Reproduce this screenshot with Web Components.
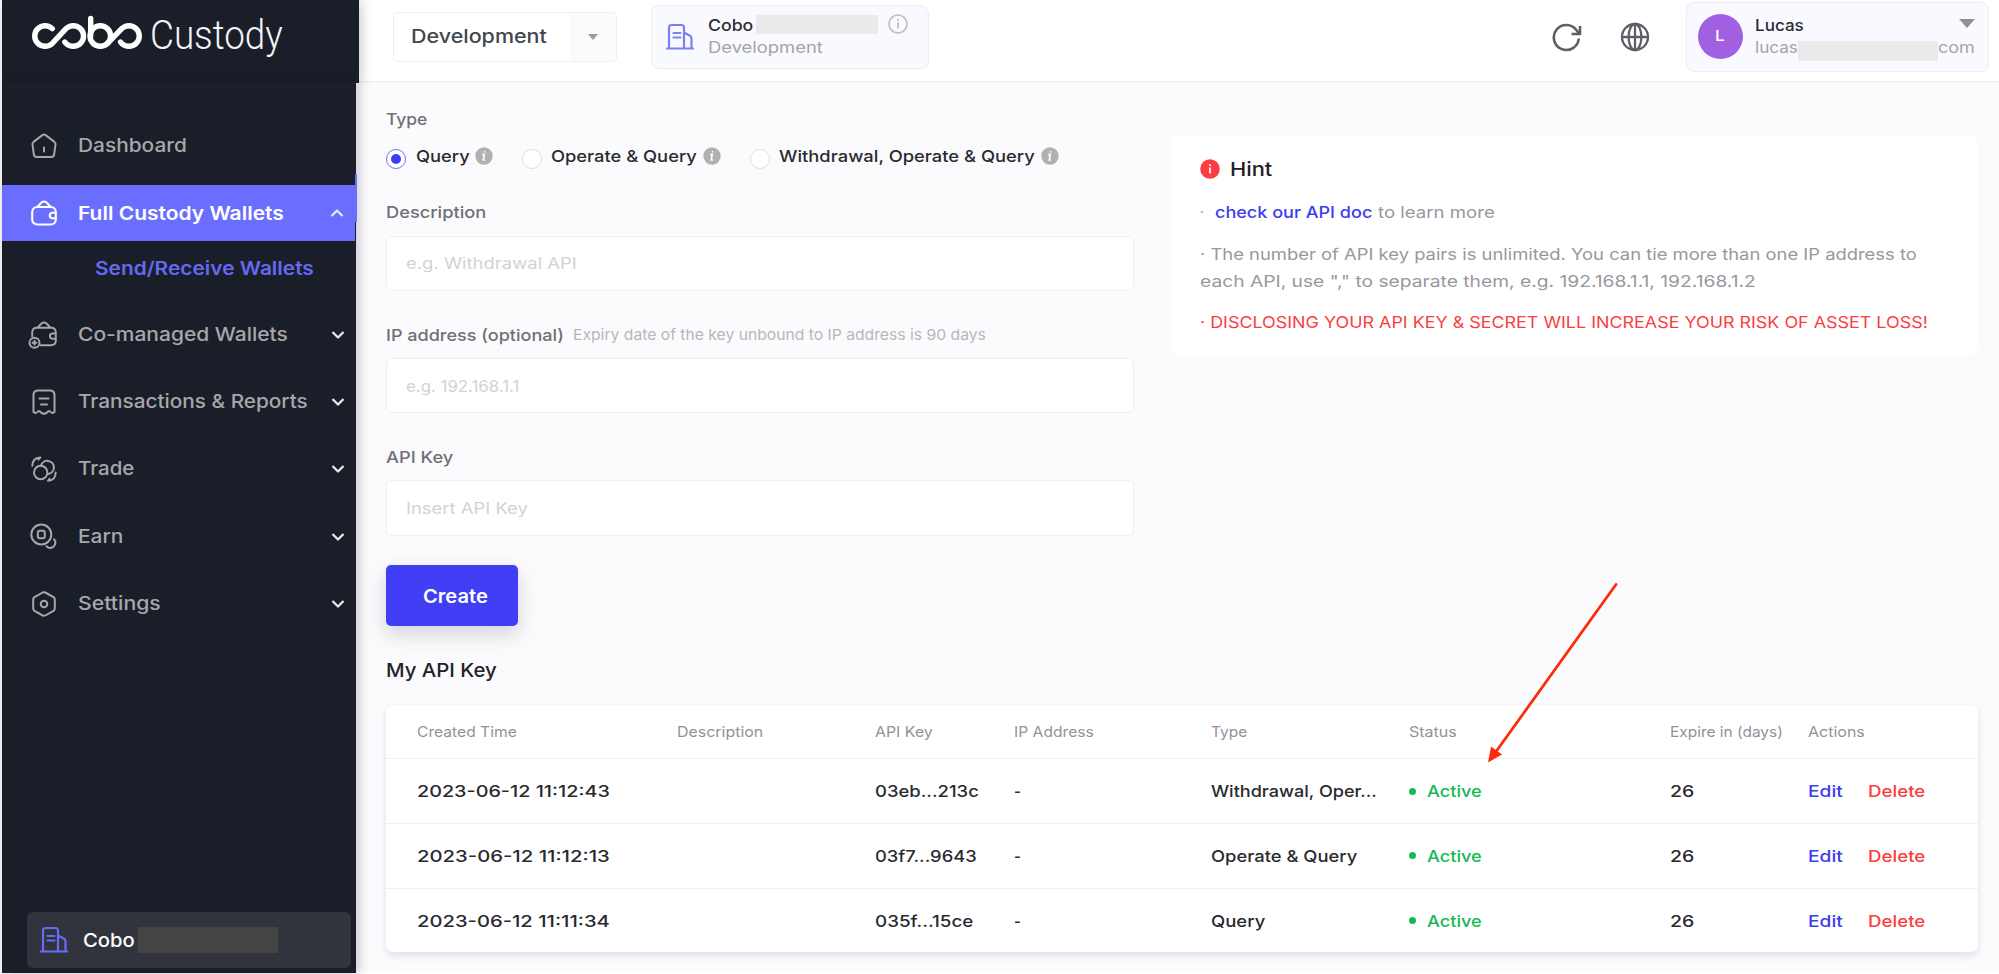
<!DOCTYPE html>
<html lang="en">
<head>
<meta charset="utf-8">
<title>Cobo Custody</title>
<style>
html,body{margin:0;height:100%;background:#fff;overflow:hidden}
body{font-family:Inter,"Open Sans",sans-serif;font-weight:460;color:#1f2026}
</style>
</head>
<body>
<custody-app></custody-app>
<script>
const define = (name, html, setup) => customElements.define(name, class extends HTMLElement {
  connectedCallback() {
    if (this.shadowRoot) return;
    const root = this.attachShadow({mode: 'open'});
    root.innerHTML = typeof html === 'function' ? html(this) : html;
    if (setup) setup(this, root);
  }
});

const S = 'fill="none" stroke="currentColor" stroke-linecap="round" stroke-linejoin="round"';
const ICONS = {
  home: `<svg width="28" height="28" viewBox="0 0 28 28" ${S} stroke-width="2"><path d="M12.700 2.900Q14 2 15.300 2.900L24.500 9.900Q25.800 11 25.500 12.600L24.100 22.800Q23.700 25 21.500 25H6.500Q4.300 25 3.900 22.800L2.500 12.600Q2.200 11 3.500 9.900ZM14 15.500V19.500"/></svg>`,
  wallet: `<svg width="28" height="28" viewBox="0 0 28 28" ${S} stroke-width="2.100"><rect x="2.200" y="8" width="23.600" height="17.500" rx="5"/><path d="M7.500 7.800L11.500 3.500Q14 1.500 16.500 3.500L20.500 7.800M25.500 13.800H22.500a2.700 2.700 0 0 0 0 5.400H25.500"/></svg>`,
  cowallet: `<svg width="32" height="30" viewBox="-4 0 32 30" ${S} stroke-width="1.900"><path d="M2.200 16.500V12.500Q2.200 7.800 7 7.800H21Q25.800 7.800 25.800 12.500V20.500Q25.800 25.200 21 25.200H10.500M7.500 7.600L11.500 3.500Q14 1.500 16.500 3.500L20.500 7.600M25.500 13.500H22.500a2.600 2.600 0 0 0 0 5.200H25.500"/><circle cx="4.500" cy="22.800" r="5"/><path d="M4.500 20.800V24.800M2.500 22.800H6.500"/></svg>`,
  receipt: `<svg width="28" height="28" viewBox="0 0 28 28" ${S} stroke-width="2"><path d="M3.500 24V7Q3.500 2.500 8 2.500H20Q24.500 2.500 24.500 7V24Q22 26 20 23.500Q18.500 22.500 17 24.500Q15.500 26 14 25.500Q12.500 26 11 24.500Q9.500 22.500 8 23.500Q6 26 3.500 24ZM9.500 10.500H18.500M11 16.500H17"/></svg>`,
  trade: `<svg width="28" height="28" viewBox="0 0 28 28" ${S} stroke-width="2"><circle cx="10.700" cy="17.500" r="6.700"/><path d="M11 10.500a6.600 6.600 0 1 1 7 8.500M2.300 10.800Q2.500 3 10.300 2.500L8.500 4.500M25.700 17.500Q25.500 25.500 18 25.800L19.500 23.800"/></svg>`,
  earn: `<svg width="28" height="28" viewBox="0 0 28 28" ${S} stroke-width="2"><circle cx="11.300" cy="11.500" r="10"/><rect x="7.800" y="7.800" width="7" height="7.500" rx="2"/><path d="M24 16.200a5.200 5.200 0 1 1 -7.700 7"/></svg>`,
  gear: `<svg width="28" height="28" viewBox="0 0 28 28" ${S} stroke-width="2"><path d="M12.700 2.500Q14 1.800 15.300 2.500L23.500 7.100Q24.800 7.900 24.800 9.400V18.600Q24.800 20.100 23.500 20.900L15.300 25.500Q14 26.200 12.700 25.500L4.500 20.900Q3.200 20.100 3.200 18.600V9.400Q3.200 7.900 4.500 7.100Z"/><circle cx="14" cy="14" r="3.300"/></svg>`,
  down: `<svg width="14" height="10" viewBox="0 0 14 10" ${S} stroke-width="2.300" style="stroke-linecap:butt"><path d="M1.500 2L7 7.500L12.500 2"/></svg>`,
  up: `<svg width="14" height="10" viewBox="0 0 14 10" ${S} stroke-width="2.200" style="stroke-linecap:butt"><path d="M1.500 8L7 2.500L12.500 8"/></svg>`,
  building: `<svg width="28" height="28" viewBox="0 0 28 28" ${S} stroke-width="2.200"><path d="M1 25.500H27M3 25.500V4.500Q3 2 5.500 2H15.500Q18 2 18 4.500V25.500M18 9.500L24 12.700Q25.500 13.500 25.500 15.500V25.500M7.500 10H14.500M7.500 14.500H14.500"/></svg>`,
  info: `<svg width="20" height="20" viewBox="0 0 20 20" fill="none" stroke="#bcbdc1" stroke-width="1.600"><circle cx="10" cy="10" r="9"/><path d="M10 8.500V14.500M10 5V7" stroke-width="1.800"/></svg>`,
  dotinfo: `<svg width="18" height="18" viewBox="0 0 18 18"><circle cx="9" cy="9" r="8.700" fill="#b1b1b3"/><path d="M9.700 4.200L9.500 5.600M7.200 7.600H9.300L8.200 13H10" stroke="#fff" stroke-width="1.600" fill="none"/></svg>`,
  alert: `<svg width="20" height="20" viewBox="0 0 20 20"><circle cx="10" cy="10" r="9.800" fill="#fb3d43"/><path d="M10 8.500V14.500M10 5.200V7" stroke="#fff" stroke-width="1.700"/></svg>`,
  refresh: `<svg width="30" height="30" viewBox="0 0 30 30" fill="none" stroke="#5c5f66" stroke-width="2.600" stroke-linejoin="round"><path d="M26.800 16.500A12.500 12.500 0 1 1 24.500 8.200L27 11.300M28 4V12H19.500"/></svg>`,
  globe: `<svg width="30" height="30" viewBox="0 0 30 30" fill="none" stroke="#5c5f66" stroke-width="2.300"><circle cx="15" cy="15" r="13"/><ellipse cx="15" cy="15" rx="6.400" ry="13"/><path d="M2 15H28M15 2V28"/></svg>`,
  caret: `<svg width="10" height="6" viewBox="0 0 10 6" fill="#9a9ca1"><path d="M0 0H10L5 6Z"/></svg>`,
  bigcaret: `<svg width="16" height="9" viewBox="0 0 16 9" fill="#8f9197"><path d="M0 0H16L8 9Z"/></svg>`,
  cobo: `<svg width="112" height="36" viewBox="31 14 112 36" fill="none" stroke="#fff" stroke-width="5.400" stroke-linecap="round" stroke-linejoin="round"><path d="M52.300 28.700A10.300 10.300 0 1 0 52.300 43.300L66 28.700A10.300 10.300 0 1 1 66 43.300L64.800 42"/><circle cx="100.300" cy="36" r="10.300"/><path d="M90.700 18.500V36M107.600 43.300L121.700 28.700A10.300 10.300 0 1 1 121.700 43.300L120.500 42"/></svg>`
};
define('ui-icon', el => `<style>:host{display:inline-flex;flex:none}svg{display:block}</style>${ICONS[el.getAttribute('name')]}`);

define('side-item', el => {
  const open = el.hasAttribute('active');
  return `<style>
  :host{display:flex;align-items:center;height:56px;margin-bottom:11.400px;color:#a6a7aa;font-size:18.700px;line-height:28px;position:relative;box-sizing:border-box;padding:0 11px 0 28px}
  :host([active]){background:#6a6eff;color:#fff;font-weight:600;margin-bottom:0;width:353.500px}
  :host([active]) slot{display:block;padding-top:1px}
  .ic{width:28px;height:30px;display:flex;align-items:center;justify-content:center;margin-right:20px}
  .co{margin-left:-4px}
  .chev{margin-left:auto;color:#e8e8ea}
  .mark{position:absolute;left:353px;top:-11px;width:2px;height:48px;background:#6a6eff}
  </style><span class="ic"><ui-icon class="${el.getAttribute('icon') === 'cowallet' ? 'co' : ''}" name="${el.getAttribute('icon')}"></ui-icon></span><slot></slot>
  ${el.hasAttribute('plain') ? '' : `<ui-icon class="chev" name="${open ? 'up' : 'down'}"></ui-icon>`}${open ? '<i class="mark"></i>' : ''}`;
});

define('side-bar', `<style>
  :host{display:flex;flex-direction:column;width:357.500px;height:972.500px;position:relative;z-index:2;font-weight:500}
  .logo{height:82.500px;background:#1a1e28;box-shadow:2px 0 12px rgba(0,0,20,.22);display:flex;align-items:flex-start;box-sizing:border-box;padding:14px 0 0 29px;border-bottom:1px solid #20232e;color:#f4f4f5}
  .custody{margin-left:7.500px;font:300 41.500px/50px Roboto,sans-serif;margin-top:-4px}
  .body{flex:1;background:#1a1e28;width:354.500px;box-shadow:2px 0 11px rgba(0,0,30,.26);display:flex;flex-direction:column;box-sizing:border-box;padding-top:35.200px}
  .sub{height:65.500px;box-sizing:border-box;padding:13.500px 0 0 93px;font:600 18.700px/28px Inter,sans-serif;color:#6468f3}
  .foot{margin:auto 5px 4.500px 25px;height:56px;border-radius:6px;background:#31333d;display:flex;align-items:center;padding-left:13px;color:#fff;font-size:18.700px}
  .foot ui-icon{color:#686cf5;margin-right:15px}
  .mask{width:140px;height:26px;background:#444;margin:-1px 0 0 4px}
  </style>
  <div class="logo"><ui-icon name="cobo"></ui-icon><fit-text class="custody" w="132">Custody</fit-text></div>
  <div class="body">
    <side-item icon="home" plain><fit-text w="108">Dashboard</fit-text></side-item>
    <side-item icon="wallet" active><fit-text w="205">Full Custody Wallets</fit-text></side-item>
    <div class="sub"><fit-text w="218">Send/Receive Wallets</fit-text></div>
    <side-item icon="cowallet"><fit-text w="209">Co-managed Wallets</fit-text></side-item>
    <side-item icon="receipt"><fit-text w="229">Transactions &amp; Reports</fit-text></side-item>
    <side-item icon="trade"><fit-text w="55.500">Trade</fit-text></side-item>
    <side-item icon="earn"><fit-text w="44.500">Earn</fit-text></side-item>
    <side-item icon="gear"><fit-text w="82">Settings</fit-text></side-item>
    <div class="foot"><ui-icon name="building"></ui-icon><fit-text w="51">Cobo</fit-text><span class="mask"></span></div>
  </div>`);

define('top-bar', `<style>
  :host{display:flex;align-items:flex-start;height:82px;box-sizing:border-box;background:#fff;border-bottom:1.500px solid #ebebee;padding-left:33.500px}
  .select{display:flex;width:224px;height:50px;box-sizing:border-box;border:1.500px solid #efeff0;border-radius:5px;margin-top:11.500px;align-items:center;padding-left:17px;font-size:18.700px;color:#43454d;overflow:hidden}
  .select b{margin-left:auto;width:46px;height:100%;background:#fafbfb;display:flex;align-items:center;justify-content:center}
  .card{box-sizing:border-box;background:#f9faff;border:1.500px solid #ececf1;border-radius:8px;display:flex;font-size:16px;line-height:22px}
  .org{width:278px;height:64.500px;margin:4.500px 0 0 34.500px;padding-left:13.500px}
  .org ui-icon.b{color:#7b7ff8;margin:17px 14.500px 0 0}
  .row{display:flex;height:22px;align-items:flex-start}
  .org .col{padding-top:8.300px}.sub{color:#a3a4a8}
  .mask{background:#eaeaea;flex:none}
  .org .m{width:122px;height:18.500px;margin:1.500px 10px 0 2.500px}
  .acts{margin-left:auto;display:flex;gap:37.500px;padding-top:21.500px}
  .user{width:303px;height:70px;margin:1.500px 10.500px 0 36px;padding-left:11px}
  .av{flex:none;width:45px;height:45px;border-radius:50%;background:#a15fe1;color:#fff;display:flex;align-items:center;justify-content:center;margin:11px 12.500px 0 0;font-size:15px}
  .user .col{padding-top:11px;width:220px}
  .user .m{width:140.500px;height:20.500px;margin:5px 0 0 0}
  .user ui-icon{margin:5.500px 0 0 auto}
  </style>
  <div class="select"><fit-text w="135">Development</fit-text><b><ui-icon name="caret"></ui-icon></b></div>
  <div class="card org"><ui-icon class="b" name="building"></ui-icon><div class="col">
    <div class="row"><fit-text w="44.500" style="color:#2b2d35;font-weight:500">Cobo</fit-text><span class="mask m"></span><ui-icon name="info"></ui-icon></div>
    <div class="row sub"><fit-text w="114" style="font-weight:400">Development</fit-text></div></div></div>
  <div class="acts"><ui-icon name="refresh"></ui-icon><ui-icon name="globe"></ui-icon></div>
  <div class="card user"><div class="av"><fit-text w="9">L</fit-text></div><div class="col">
    <div class="row"><fit-text w="48" style="color:#2b2d35;font-weight:550">Lucas</fit-text><ui-icon name="bigcaret"></ui-icon></div>
    <div class="row sub"><fit-text w="42" style="font-weight:400">lucas</fit-text><span class="mask m"></span><fit-text w="36" style="font-weight:400">com</fit-text></div></div></div>`);

define('radio-option', `<style>
  :host{display:flex;align-items:center;height:24px;color:#2a2b30;font-size:16.300px}
  i{width:20px;height:20px;box-sizing:border-box;border:1.500px solid #dfdfe1;border-radius:50%;background:#fff;margin:7px 9.500px 0 0;display:flex;align-items:center;justify-content:center}
  :host([checked]) i{border-color:#6f70fa}
  :host([checked]) i::before{content:"";width:10px;height:10px;border-radius:50%;background:#3d3df5}
  ui-icon{margin-left:6px;margin-top:1px}
  </style><i></i><slot></slot><ui-icon name="dotinfo"></ui-icon>`);

define('form-field', `<style>
  :host{display:block;margin-bottom:31.500px}
  .label{height:24px;line-height:24px;font-size:16.500px;color:#6f7075;display:flex;margin-bottom:11.200px}
  .box{height:55.500px;box-sizing:border-box;border:1.500px solid #efeff0;border-radius:6px;background:#fff;padding-left:19px;display:flex;align-items:center;font-size:16.300px;font-weight:400;color:#d2d3d5}
  </style><div class="label"><slot name="label"></slot></div><div class="box"><slot></slot></div>`);

define('key-form', `<style>
  :host{display:block;width:747.500px}
  .type{height:24px;line-height:24px;font-size:16.500px;color:#6f7075}
  .radios{display:flex;margin:12.700px 0 32.500px}
  radio-option+radio-option{margin-left:28.500px}
  .create{width:132px;height:61.500px;border-radius:5px;background:#403ff5;color:#fff;display:flex;align-items:center;justify-content:center;font-size:18.700px;font-weight:600;margin-top:29.400px;box-shadow:0 8px 20px rgba(20,20,50,.17);box-sizing:border-box;padding:1px 0 0 6px}
  form-field:last-of-type{margin-bottom:0}
  .hint{font-size:14.800px;color:#b6b7bb;font-weight:400;margin-left:9.500px}
  </style>
  <div class="type"><fit-text w="40.500">Type</fit-text></div>
  <div class="radios">
    <radio-option checked><fit-text w="53">Query</fit-text></radio-option>
    <radio-option><fit-text w="145">Operate &amp; Query</fit-text></radio-option>
    <radio-option><fit-text w="255">Withdrawal, Operate &amp; Query</fit-text></radio-option>
  </div>
  <form-field><fit-text slot="label" w="99.500">Description</fit-text><fit-text w="170">e.g. Withdrawal API</fit-text></form-field>
  <form-field><fit-text slot="label" w="177">IP address (optional)</fit-text><fit-text slot="label" class="hint" w="412">Expiry date of the key unbound to IP address is 90 days</fit-text><fit-text w="112.500">e.g. 192.168.1.1</fit-text></form-field>
  <form-field><fit-text slot="label" w="66.500">API Key</fit-text><fit-text w="121">Insert API Key</fit-text></form-field>
  <div class="create"><fit-text w="64">Create</fit-text></div>`);

define('hint-card', `<style>
  :host{display:block;width:807px;height:220.500px;box-sizing:border-box;background:#fff;border-radius:9px;padding:20px 29px;font-size:16.300px;line-height:27px;font-weight:400;color:#97989d}
  .t{display:flex;align-items:center;height:28px;font-size:19px;color:#1f2026;font-weight:460}
  .t ui-icon{margin-right:10px}
  .t fit-text{margin-top:1.500px}
  p{margin:0;display:flex}
  a{color:#3d3df0;font-weight:460;margin:0 5.500px 0 11px}
  </style>
  <div class="t"><ui-icon name="alert"></ui-icon><fit-text w="41.500">Hint</fit-text></div>
  <p style="margin-top:15.800px"><fit-text w="3">·</fit-text><a><fit-text w="156.500">check our API doc</fit-text></a><fit-text w="116">to learn more</fit-text></p>
  <p style="margin-top:15.200px"><fit-text w="716">· The number of API key pairs is unlimited. You can tie more than one IP address to</fit-text></p>
  <p><fit-text w="555">each API, use "," to separate them, e.g. 192.168.1.1, 192.168.1.2</fit-text></p>
  <p style="margin-top:14.300px;color:#fb3d43"><fit-text w="727">· DISCLOSING YOUR API KEY &amp; SECRET WILL INCREASE YOUR RISK OF ASSET LOSS!</fit-text></p>`);

const HEAD = [['Created Time', 99], ['Description', 85.5], ['API Key', 57], ['IP Address', 79], ['Type', 35.5], ['Status', 47], ['Expire in (days)', 112], ['Actions', 56]];
const ROWS = [
  ['2023-06-12 11:12:43', '03eb...213c', 103, 'Withdrawal, Oper...', 165],
  ['2023-06-12 11:12:13', '03f7...9643', 101, 'Operate &amp; Query', 145.5],
  ['2023-06-12 11:11:34', '035f...15ce', 97.5, 'Query', 53.5]
];
const fit = (t, w) => `<fit-text w="${w}">${t}</fit-text>`;
define('key-table', `<style>
  :host{display:block;width:1592px;background:#fff;border-radius:7px;box-shadow:0 4px 7px rgba(50,50,100,.13);height:247px}
  .r{display:grid;grid-template-columns:260.500px 197.500px 139px 197.500px 198px 260.500px 138.500px 1fr;padding-left:30.500px;height:64.600px;box-sizing:border-box;align-items:center;border-bottom:1.500px solid #efeff1;font-size:16.300px;color:#292a2f}
  .h{height:54.500px;font-size:14.500px;color:#929398;font-weight:400;padding-bottom:1px}
  .r:last-child{border:0;height:64px}
  .st{display:flex;align-items:center;color:#16b955}
  .st i{width:7px;height:7px;border-radius:50%;background:#16b955;margin-right:10.500px}
  .ed{color:#3d3df0;margin-right:25px}.de{color:#fb3d43}
  .ac{display:flex}
  </style>
  <div class="r h">${HEAD.map(h => `<span>${fit(...h)}</span>`).join('')}</div>
  ${ROWS.map(r => `<div class="r"><span>${fit(r[0], 192)}</span><span></span><span>${fit(r[1], r[2])}</span><span>${fit('-', 6)}</span><span>${fit(r[3], r[4])}</span><span class="st"><i></i>${fit('Active', 54)}</span><span>${fit('26', 23.5)}</span><span class="ac"><span class="ed">${fit('Edit', 34)}</span><span class="de">${fit('Delete', 56.5)}</span></span></div>`).join('')}`);

define('custody-app', `<style>
  :host{display:flex;width:1999px;height:974px;box-sizing:border-box;padding:0 0 1.500px 1.500px;position:relative;background:#fff;overflow:hidden}
  .page{flex:1;min-width:0;background:#fbfbfd;display:flex;flex-direction:column}
  .main{padding:25.300px 0 0 27px}
  .cols{display:flex;gap:37.500px}
  hint-card{margin-top:27.700px}
  h2{margin:31px 0 0;height:28px;line-height:28px;font-size:19px;font-weight:460;color:#222329}
  key-table{margin-top:19.500px}
  .arrow{position:absolute;left:1480px;top:576px;z-index:3}
  </style>
  <side-bar></side-bar>
  <div class="page"><top-bar></top-bar>
    <div class="main">
      <div class="cols"><key-form></key-form><hint-card></hint-card></div>
      <h2><fit-text w="110">My API Key</fit-text></h2>
      <key-table></key-table>
    </div>
  </div>
  <svg class="arrow" width="144" height="192" viewBox="1480 576 144 192"><path d="M1616 584.500L1495 753" stroke="#ff2a0c" stroke-width="2.800" stroke-linecap="round"/><path d="M1488 762.500L1491 746.500L1502 754.500Z" fill="#ff2a0c"/></svg>`);

/* A text run set to a given ink width: the glyphs are stretched to fill it. */
define('fit-text', `<style>:host{display:inline-block;white-space:nowrap;flex:none}span{display:inline-block;transform-origin:0 50%}</style><span><slot></slot></span>`, (el, root) => {
  const span = root.querySelector('span');
  const target = parseFloat(el.getAttribute('w')) + .8;
  const natural = span.getBoundingClientRect().width;
  el.style.width = target + 'px';
  if (natural) span.style.transform = `scaleX(${(target / natural).toFixed(4)})`;
});
</script>
</body>
</html>
